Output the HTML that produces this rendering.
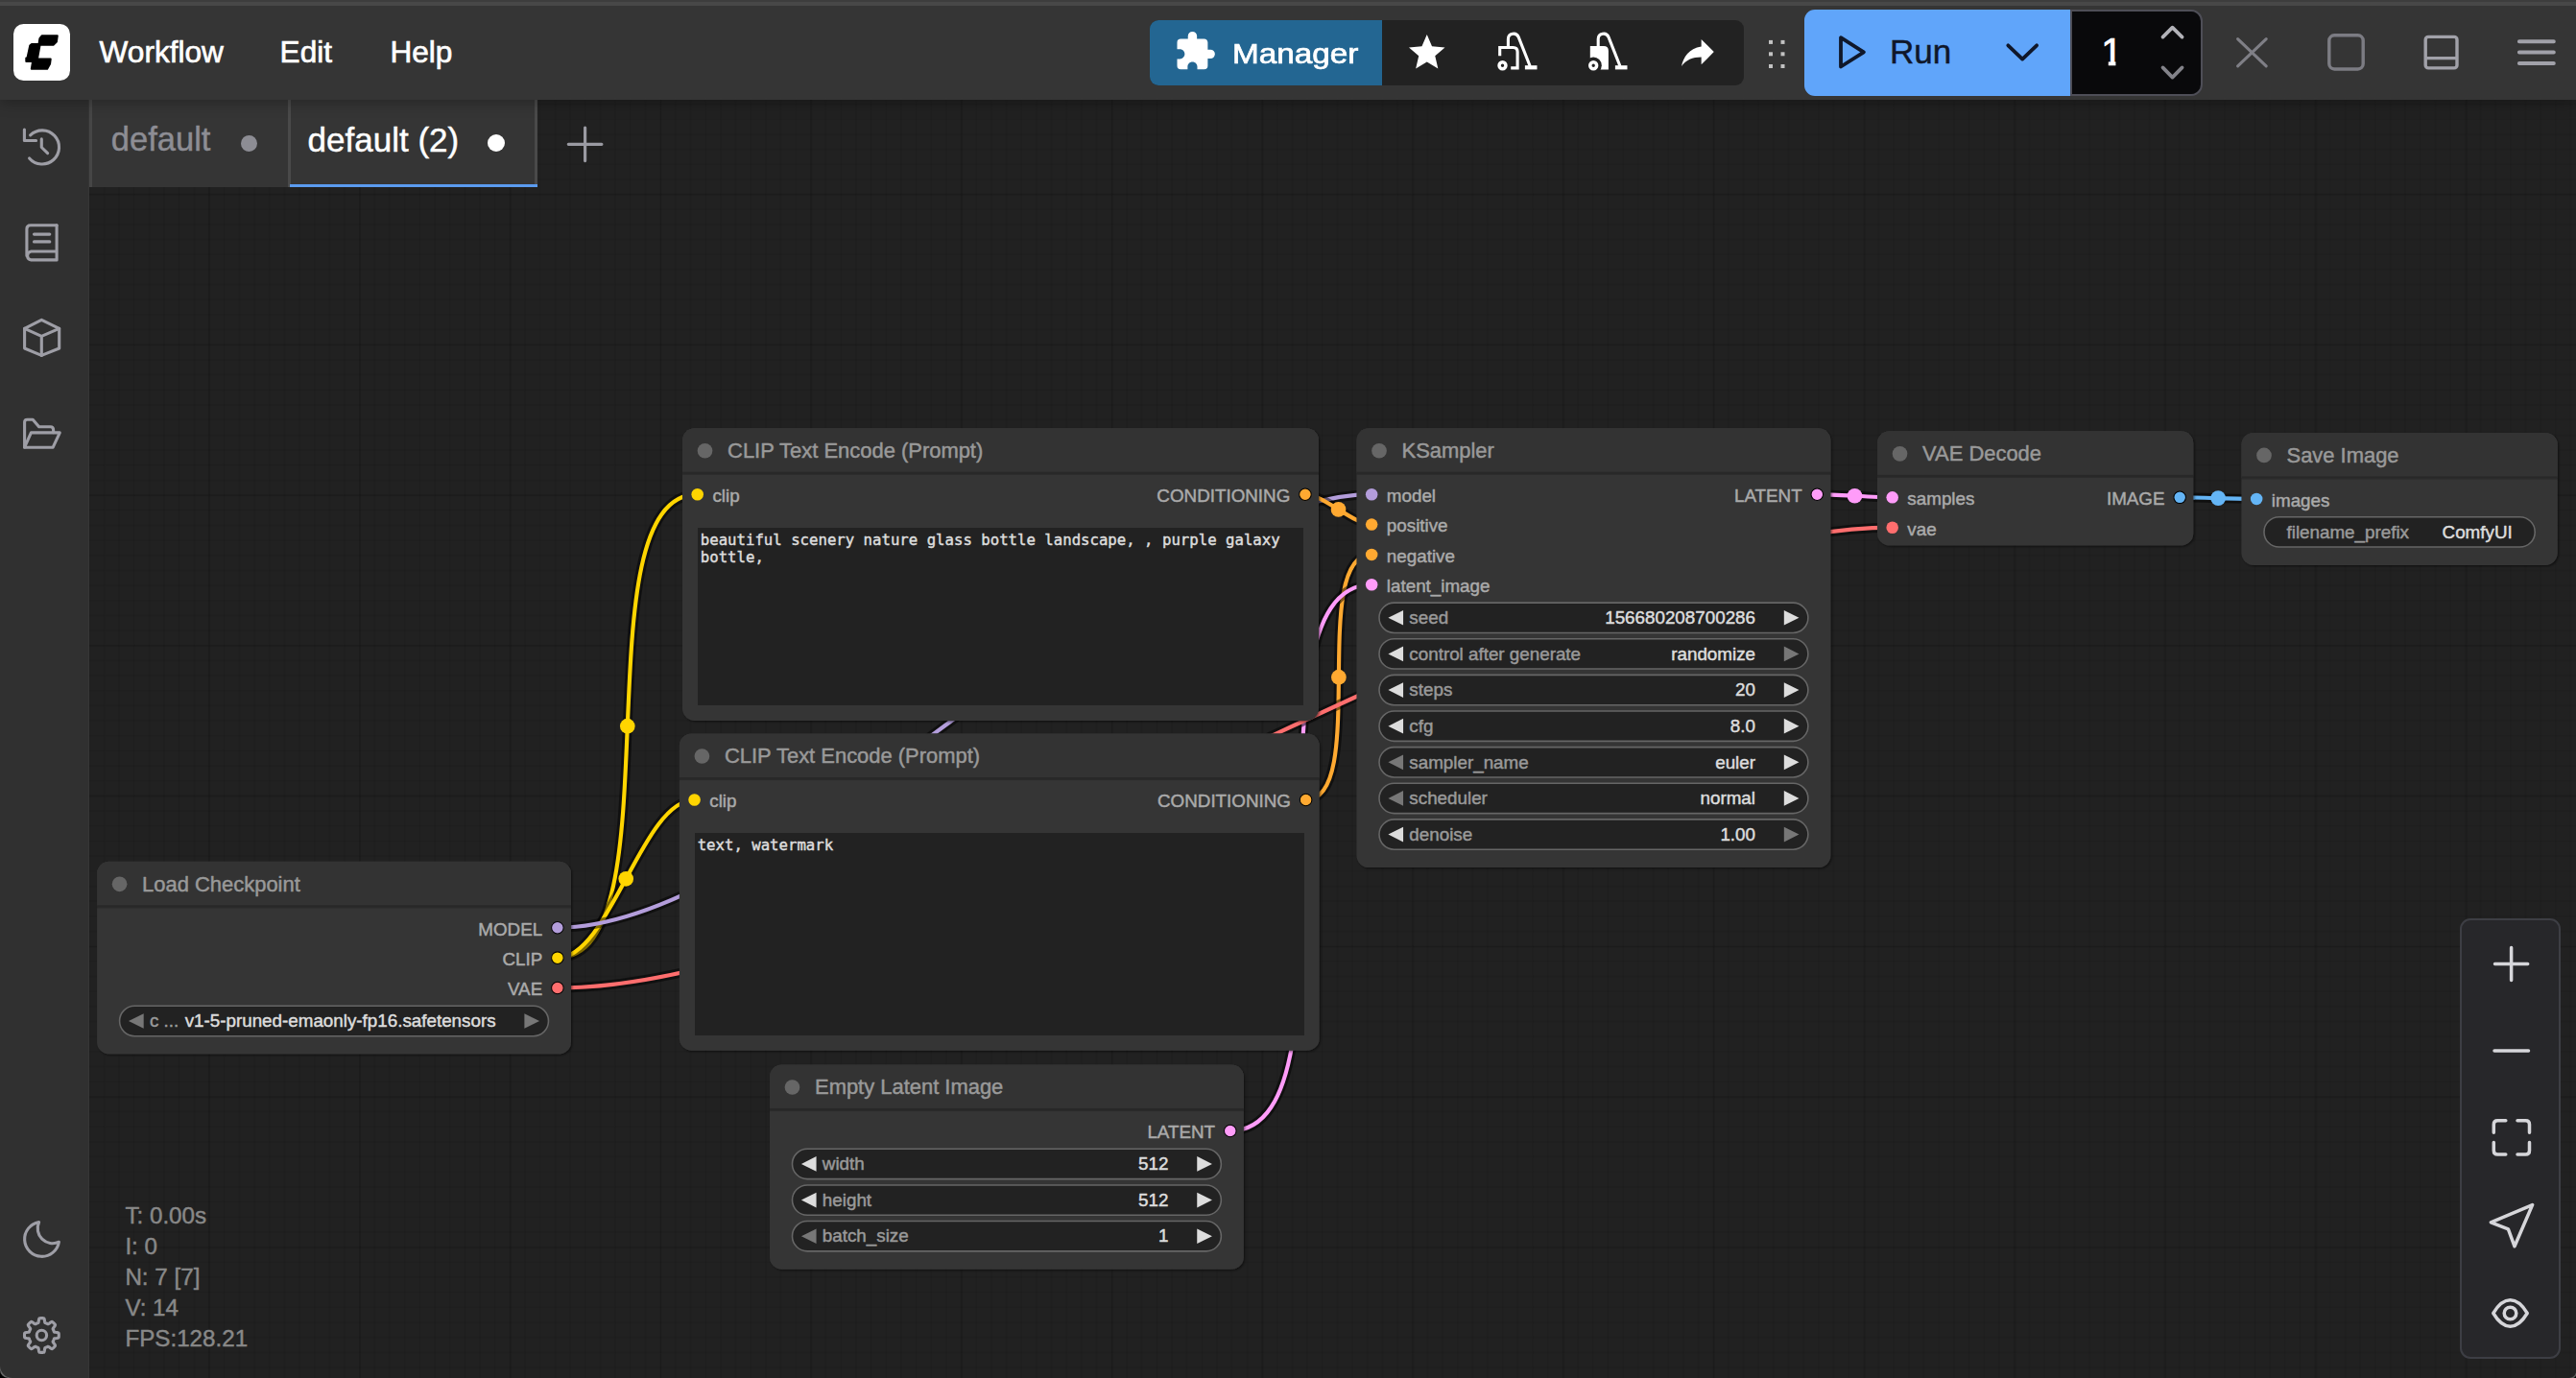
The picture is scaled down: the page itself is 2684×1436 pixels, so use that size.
<!DOCTYPE html>
<html lang="en">
<head>
<meta charset="utf-8">
<title>ComfyUI</title>
<style>
*{box-sizing:border-box}
html,body{margin:0;padding:0;width:2684px;height:1436px;overflow:hidden;background:#212121;font-family:"Liberation Sans",Arial,sans-serif}
#app{position:relative;width:2684px;height:1436px;overflow:hidden}
.abs,#app>*,#top>*,#side>*,#tabs>*,#zoom>*{position:absolute}
#canvasbg{left:93px;top:104px;width:2591px;height:1332px;background-color:#212121;
 background-image:linear-gradient(to right,rgba(0,0,0,.055) 1.6px,transparent 1.6px),linear-gradient(to bottom,rgba(0,0,0,.055) 1.6px,transparent 1.6px),linear-gradient(to right,rgba(0,0,0,.09) 1.6px,transparent 1.6px),linear-gradient(to bottom,rgba(0,0,0,.09) 1.6px,transparent 1.6px);
 background-size:15.68px 15.68px,15.68px 15.68px,156.8px 156.8px,156.8px 156.8px;background-position:-32.7px 97.6px,-32.7px 97.6px,-32.7px 97.6px,-32.7px 97.6px}
svg.graph{left:0;top:0}
.gt text{paint-order:stroke;stroke-width:.3px;stroke-linejoin:round}
.t,#info,.ta{-webkit-text-stroke:.45px currentColor}
.menu{-webkit-text-stroke:.65px currentColor}
.ta{background:#222;color:#ddd;font-family:"DejaVu Sans Mono","Liberation Mono",monospace;font-size:15.68px;line-height:18.7px;padding:4.1px 3.1px 0;white-space:pre;overflow:hidden}
#info{left:130.4px;top:1250.6px;color:#888;font-size:24.2px;line-height:32.2px;white-space:pre}
/* top bar */
#top{left:0;top:0;width:2684px;height:104px;background:#353535;box-shadow:0 3px 14px rgba(0,0,0,.28)}
#strip1{left:0;top:0;width:100%;height:1.5px;background:#3d3d3d}
#strip2{left:0;top:1.5px;width:100%;height:4px;background:#484848}
.t{white-space:pre;line-height:1}
.menu{color:#fff;font-size:31.6px}
#logo{left:14px;top:25px;width:59px;height:59px}
#grp{left:1198px;top:21px;width:619px;height:68px;background:#222;border-radius:9px;overflow:hidden}
#mgr{left:0;top:0;width:242px;height:68px;background:#236692}
#run{left:1880px;top:10px;width:277.2px;height:90px;background:#60a5fa;border-radius:11px 0 0 11px}
#num{left:2157px;top:10px;width:138px;height:90px;background:#09090b;border:2.1px solid #4e4e57;border-radius:0 12px 12px 0}
/* sidebar */
#side{left:0;top:104px;width:93px;height:1332px;background:#303030;border-right:1.2px solid #363636}
#sideb{left:93px;top:104px;width:3px;height:91px;background:#464646}
/* tabs */
#tabs{left:96px;top:104px;width:464px;height:91px;background:#353535}
#tabsep{left:204px;top:0;width:2.5px;height:91px;background:#4a4a4a}
#tabend{left:461px;top:0;width:3px;height:91px;background:#4a4a4a}
#tabul{left:206px;top:88px;width:258px;height:3px;background:#5b9bef}
.dot{border-radius:50%}
/* zoom panel */
#zoom{left:2563.2px;top:957.2px;width:104.8px;height:458.5px;background:#27272a;border:2.5px solid #3d3e44;border-radius:11px}
</style>
</head>
<body>
<div id="app">
<div id="canvasbg"></div>
<svg class="graph" width="2684" height="1436" viewBox="0 0 2684 1436"><defs><filter id="sh" x="-5%" y="-5%" width="110%" height="112%"><feDropShadow dx="0.8" dy="0.8" stdDeviation="0.6" flood-color="#000" flood-opacity="0.5"/></filter></defs><g transform="translate(60.3 201.6) scale(1.568)" font-family="'Liberation Sans',Arial,sans-serif" class="gt"><g fill="none" stroke-linejoin="round"><path d="M332 508C412.43 508 344.57 200 425 200" stroke="rgba(0,0,0,.5)" stroke-width="6.3"/><path d="M332 508C412.43 508 344.57 200 425 200" stroke="#FFD500" stroke-width="2.65"/><circle cx="378.5" cy="354" r="5" fill="#FFD500"/><path d="M332 508C366.74 508 388.26 403 423 403" stroke="rgba(0,0,0,.5)" stroke-width="6.3"/><path d="M332 508C366.74 508 388.26 403 423 403" stroke="#FFD500" stroke-width="2.65"/><circle cx="377.5" cy="455.5" r="5" fill="#FFD500"/><path d="M332 488C485.22 488 719.78 200 873 200" stroke="rgba(0,0,0,.5)" stroke-width="6.3"/><path d="M332 488C485.22 488 719.78 200 873 200" stroke="#B39DDB" stroke-width="2.65"/><circle cx="602.5" cy="344" r="5" fill="#B39DDB"/><path d="M828.85 200C840.96 200 860.88 220 873 220" stroke="rgba(0,0,0,.5)" stroke-width="6.3"/><path d="M828.85 200C840.96 200 860.88 220 873 220" stroke="#FFA931" stroke-width="2.65"/><circle cx="850.92" cy="210" r="5" fill="#FFA931"/><path d="M829.28 403C871.47 403 830.81 240 873 240" stroke="rgba(0,0,0,.5)" stroke-width="6.3"/><path d="M829.28 403C871.47 403 830.81 240 873 240" stroke="#FFA931" stroke-width="2.65"/><circle cx="851.14" cy="321.5" r="5" fill="#FFA931"/><path d="M779 623C872.74 623 779.26 260 873 260" stroke="rgba(0,0,0,.5)" stroke-width="6.3"/><path d="M779 623C872.74 623 779.26 260 873 260" stroke="#FF9CF9" stroke-width="2.65"/><circle cx="826" cy="441.5" r="5" fill="#FF9CF9"/><path d="M1169 200C1181.51 200 1206.49 202 1219 202" stroke="rgba(0,0,0,.5)" stroke-width="6.3"/><path d="M1169 200C1181.51 200 1206.49 202 1219 202" stroke="#FF9CF9" stroke-width="2.65"/><circle cx="1194" cy="201" r="5" fill="#FF9CF9"/><path d="M332 528C566.57 528 984.43 222 1219 222" stroke="rgba(0,0,0,.5)" stroke-width="6.3"/><path d="M332 528C566.57 528 984.43 222 1219 222" stroke="#FF6E6E" stroke-width="2.65"/><circle cx="775.5" cy="375" r="5" fill="#FF6E6E"/><path d="M1410 202C1422.75 202 1448.25 203 1461 203" stroke="rgba(0,0,0,.5)" stroke-width="6.3"/><path d="M1410 202C1422.75 202 1448.25 203 1461 203" stroke="#64B5F6" stroke-width="2.65"/><circle cx="1435.5" cy="202.5" r="5" fill="#64B5F6"/></g><g transform="translate(26 474)"><rect x="0" y="-30" width="315" height="128" rx="8" fill="#353535" filter="url(#sh)"/><path d="M0 0V-22 a8 8 0 0 1 8 -8 H307 a8 8 0 0 1 8 8 V0Z" fill="#333"/><rect x="0" y="-1" width="315" height="2" fill="rgba(0,0,0,.2)"/><circle cx="15" cy="-15" r="5" fill="#666"/><text x="30" y="-10.3" font-size="14" fill="#999" stroke="#999">Load Checkpoint</text><circle cx="306" cy="14" r="4" fill="#B39DDB" stroke="#000" stroke-width="0.65"/><text x="296" y="19" font-size="12" fill="#AAA" stroke="#AAA" text-anchor="end">MODEL</text><circle cx="306" cy="34" r="4" fill="#FFD500" stroke="#000" stroke-width="0.65"/><text x="296" y="39" font-size="12" fill="#AAA" stroke="#AAA" text-anchor="end">CLIP</text><circle cx="306" cy="54" r="4" fill="#FF6E6E" stroke="#000" stroke-width="0.65"/><text x="296" y="59" font-size="12" fill="#AAA" stroke="#AAA" text-anchor="end">VAE</text><rect x="15" y="66" width="285" height="20" rx="10" fill="#222" stroke="#666" stroke-width="1"/><path d="M31 71L21 76L31 81Z" fill="#777"/><path d="M284 71L294 76L284 81Z" fill="#777"/><text x="35" y="80" font-size="12" fill="#999" stroke="#999">c ...</text><text x="265" y="80" font-size="12" fill="#DDD" stroke="#DDD" text-anchor="end">v1-5-pruned-emaonly-fp16.safetensors</text></g><g transform="translate(415 186)"><rect x="0" y="-30" width="422.85" height="194.31" rx="8" fill="#353535" filter="url(#sh)"/><path d="M0 0V-22 a8 8 0 0 1 8 -8 H414.85 a8 8 0 0 1 8 8 V0Z" fill="#333"/><rect x="0" y="-1" width="422.85" height="2" fill="rgba(0,0,0,.2)"/><circle cx="15" cy="-15" r="5" fill="#666"/><text x="30" y="-10.3" font-size="14" fill="#999" stroke="#999">CLIP Text Encode (Prompt)</text><circle cx="10" cy="14" r="4" fill="#FFD500"/><text x="20" y="19" font-size="12" fill="#AAA" stroke="#AAA">clip</text><circle cx="413.85" cy="14" r="4" fill="#FFA931" stroke="#000" stroke-width="0.65"/><text x="403.85" y="19" font-size="12" fill="#AAA" stroke="#AAA" text-anchor="end">CONDITIONING</text></g><g transform="translate(413 389)"><rect x="0" y="-30" width="425.28" height="210.61" rx="8" fill="#353535" filter="url(#sh)"/><path d="M0 0V-22 a8 8 0 0 1 8 -8 H417.28 a8 8 0 0 1 8 8 V0Z" fill="#333"/><rect x="0" y="-1" width="425.28" height="2" fill="rgba(0,0,0,.2)"/><circle cx="15" cy="-15" r="5" fill="#666"/><text x="30" y="-10.3" font-size="14" fill="#999" stroke="#999">CLIP Text Encode (Prompt)</text><circle cx="10" cy="14" r="4" fill="#FFD500"/><text x="20" y="19" font-size="12" fill="#AAA" stroke="#AAA">clip</text><circle cx="416.28" cy="14" r="4" fill="#FFA931" stroke="#000" stroke-width="0.65"/><text x="406.28" y="19" font-size="12" fill="#AAA" stroke="#AAA" text-anchor="end">CONDITIONING</text></g><g transform="translate(473 609)"><rect x="0" y="-30" width="315" height="136" rx="8" fill="#353535" filter="url(#sh)"/><path d="M0 0V-22 a8 8 0 0 1 8 -8 H307 a8 8 0 0 1 8 8 V0Z" fill="#333"/><rect x="0" y="-1" width="315" height="2" fill="rgba(0,0,0,.2)"/><circle cx="15" cy="-15" r="5" fill="#666"/><text x="30" y="-10.3" font-size="14" fill="#999" stroke="#999">Empty Latent Image</text><circle cx="306" cy="14" r="4" fill="#FF9CF9" stroke="#000" stroke-width="0.65"/><text x="296" y="19" font-size="12" fill="#AAA" stroke="#AAA" text-anchor="end">LATENT</text><rect x="15" y="26" width="285" height="20" rx="10" fill="#222" stroke="#666" stroke-width="1"/><path d="M31 31L21 36L31 41Z" fill="#DDD"/><path d="M284 31L294 36L284 41Z" fill="#DDD"/><text x="35" y="40" font-size="12" fill="#999" stroke="#999">width</text><text x="265" y="40" font-size="12" fill="#DDD" stroke="#DDD" text-anchor="end">512</text><rect x="15" y="50" width="285" height="20" rx="10" fill="#222" stroke="#666" stroke-width="1"/><path d="M31 55L21 60L31 65Z" fill="#DDD"/><path d="M284 55L294 60L284 65Z" fill="#DDD"/><text x="35" y="64" font-size="12" fill="#999" stroke="#999">height</text><text x="265" y="64" font-size="12" fill="#DDD" stroke="#DDD" text-anchor="end">512</text><rect x="15" y="74" width="285" height="20" rx="10" fill="#222" stroke="#666" stroke-width="1"/><path d="M31 79L21 84L31 89Z" fill="#777"/><path d="M284 79L294 84L284 89Z" fill="#DDD"/><text x="35" y="88" font-size="12" fill="#999" stroke="#999">batch_size</text><text x="265" y="88" font-size="12" fill="#DDD" stroke="#DDD" text-anchor="end">1</text></g><g transform="translate(863 186)"><rect x="0" y="-30" width="315" height="292" rx="8" fill="#353535" filter="url(#sh)"/><path d="M0 0V-22 a8 8 0 0 1 8 -8 H307 a8 8 0 0 1 8 8 V0Z" fill="#333"/><rect x="0" y="-1" width="315" height="2" fill="rgba(0,0,0,.2)"/><circle cx="15" cy="-15" r="5" fill="#666"/><text x="30" y="-10.3" font-size="14" fill="#999" stroke="#999">KSampler</text><circle cx="10" cy="14" r="4" fill="#B39DDB"/><text x="20" y="19" font-size="12" fill="#AAA" stroke="#AAA">model</text><circle cx="10" cy="34" r="4" fill="#FFA931"/><text x="20" y="39" font-size="12" fill="#AAA" stroke="#AAA">positive</text><circle cx="10" cy="54" r="4" fill="#FFA931"/><text x="20" y="59" font-size="12" fill="#AAA" stroke="#AAA">negative</text><circle cx="10" cy="74" r="4" fill="#FF9CF9"/><text x="20" y="79" font-size="12" fill="#AAA" stroke="#AAA">latent_image</text><circle cx="306" cy="14" r="4" fill="#FF9CF9" stroke="#000" stroke-width="0.65"/><text x="296" y="19" font-size="12" fill="#AAA" stroke="#AAA" text-anchor="end">LATENT</text><rect x="15" y="86" width="285" height="20" rx="10" fill="#222" stroke="#666" stroke-width="1"/><path d="M31 91L21 96L31 101Z" fill="#DDD"/><path d="M284 91L294 96L284 101Z" fill="#DDD"/><text x="35" y="100" font-size="12" fill="#999" stroke="#999">seed</text><text x="265" y="100" font-size="12" fill="#DDD" stroke="#DDD" text-anchor="end">156680208700286</text><rect x="15" y="110" width="285" height="20" rx="10" fill="#222" stroke="#666" stroke-width="1"/><path d="M31 115L21 120L31 125Z" fill="#DDD"/><path d="M284 115L294 120L284 125Z" fill="#777"/><text x="35" y="124" font-size="12" fill="#999" stroke="#999">control after generate</text><text x="265" y="124" font-size="12" fill="#DDD" stroke="#DDD" text-anchor="end">randomize</text><rect x="15" y="134" width="285" height="20" rx="10" fill="#222" stroke="#666" stroke-width="1"/><path d="M31 139L21 144L31 149Z" fill="#DDD"/><path d="M284 139L294 144L284 149Z" fill="#DDD"/><text x="35" y="148" font-size="12" fill="#999" stroke="#999">steps</text><text x="265" y="148" font-size="12" fill="#DDD" stroke="#DDD" text-anchor="end">20</text><rect x="15" y="158" width="285" height="20" rx="10" fill="#222" stroke="#666" stroke-width="1"/><path d="M31 163L21 168L31 173Z" fill="#DDD"/><path d="M284 163L294 168L284 173Z" fill="#DDD"/><text x="35" y="172" font-size="12" fill="#999" stroke="#999">cfg</text><text x="265" y="172" font-size="12" fill="#DDD" stroke="#DDD" text-anchor="end">8.0</text><rect x="15" y="182" width="285" height="20" rx="10" fill="#222" stroke="#666" stroke-width="1"/><path d="M31 187L21 192L31 197Z" fill="#777"/><path d="M284 187L294 192L284 197Z" fill="#DDD"/><text x="35" y="196" font-size="12" fill="#999" stroke="#999">sampler_name</text><text x="265" y="196" font-size="12" fill="#DDD" stroke="#DDD" text-anchor="end">euler</text><rect x="15" y="206" width="285" height="20" rx="10" fill="#222" stroke="#666" stroke-width="1"/><path d="M31 211L21 216L31 221Z" fill="#777"/><path d="M284 211L294 216L284 221Z" fill="#DDD"/><text x="35" y="220" font-size="12" fill="#999" stroke="#999">scheduler</text><text x="265" y="220" font-size="12" fill="#DDD" stroke="#DDD" text-anchor="end">normal</text><rect x="15" y="230" width="285" height="20" rx="10" fill="#222" stroke="#666" stroke-width="1"/><path d="M31 235L21 240L31 245Z" fill="#DDD"/><path d="M284 235L294 240L284 245Z" fill="#777"/><text x="35" y="244" font-size="12" fill="#999" stroke="#999">denoise</text><text x="265" y="244" font-size="12" fill="#DDD" stroke="#DDD" text-anchor="end">1.00</text></g><g transform="translate(1209 188)"><rect x="0" y="-30" width="210" height="76" rx="8" fill="#353535" filter="url(#sh)"/><path d="M0 0V-22 a8 8 0 0 1 8 -8 H202 a8 8 0 0 1 8 8 V0Z" fill="#333"/><rect x="0" y="-1" width="210" height="2" fill="rgba(0,0,0,.2)"/><circle cx="15" cy="-15" r="5" fill="#666"/><text x="30" y="-10.3" font-size="14" fill="#999" stroke="#999">VAE Decode</text><circle cx="10" cy="14" r="4" fill="#FF9CF9"/><text x="20" y="19" font-size="12" fill="#AAA" stroke="#AAA">samples</text><circle cx="10" cy="34" r="4" fill="#FF6E6E"/><text x="20" y="39" font-size="12" fill="#AAA" stroke="#AAA">vae</text><circle cx="201" cy="14" r="4" fill="#64B5F6" stroke="#000" stroke-width="0.65"/><text x="191" y="19" font-size="12" fill="#AAA" stroke="#AAA" text-anchor="end">IMAGE</text></g><g transform="translate(1451 189)"><rect x="0" y="-30" width="210" height="88" rx="8" fill="#353535" filter="url(#sh)"/><path d="M0 0V-22 a8 8 0 0 1 8 -8 H202 a8 8 0 0 1 8 8 V0Z" fill="#333"/><rect x="0" y="-1" width="210" height="2" fill="rgba(0,0,0,.2)"/><circle cx="15" cy="-15" r="5" fill="#666"/><text x="30" y="-10.3" font-size="14" fill="#999" stroke="#999">Save Image</text><circle cx="10" cy="14" r="4" fill="#64B5F6"/><text x="20" y="19" font-size="12" fill="#AAA" stroke="#AAA">images</text><rect x="15" y="26" width="180" height="20" rx="10" fill="#222" stroke="#666" stroke-width="1"/><text x="30" y="40" font-size="12" fill="#999" stroke="#999">filename_prefix</text><text x="180" y="40" font-size="12" fill="#DDD" stroke="#DDD" text-anchor="end">ComfyUI</text></g></g></svg>
<div class="ta" style="left:726.7px;top:549.7px;width:631.66px;height:185.51px">beautiful scenery nature glass bottle landscape, , purple galaxy<br>bottle,</div><div class="ta" style="left:723.56px;top:868px;width:635.48px;height:211.06px">text, watermark</div>
<div id="info">T: 0.00s
I: 0
N: 7 [7]
V: 14
FPS:128.21</div>

<div id="side">
<svg class="abs" style="left:0;top:0" width="93" height="1332" viewBox="0 104 93 1332" fill="none" stroke="#9e9ea6" stroke-width="3.1" stroke-linecap="round" stroke-linejoin="round"><path d="M25.4 135V146.5H37.6"/><path d="M31.6 140.9A17.6 17.6 0 1 1 30.6 164.9"/><path d="M43.3 144.9V153.5L49.6 159.6"/><path d="M59.1 234.8H31.9Q27.9 234.8 27.9 238.8V266.4"/><path d="M59.1 234.8V270.9H32.4A4.5 4.5 0 0 1 32.4 262H59.1"/><path d="M35.5 244.1H51.8M35.5 251.9H51.8"/><path d="M43.3 333.4L61.7 342.4V363L43.3 370.4L25.6 363V342.4Z"/><path d="M25.6 342.4L43.3 350.4L61.7 342.4M43.3 350.4V370.4"/><path d="M25.6 466V440Q25.6 437.2 28.4 437.2H34.2L40.6 444.8H52.6Q55.6 444.8 55.6 448V450.8"/><path d="M25.6 466.2L32.4 450.9H62.3L55.2 466.2Z"/><path d="M40.6 1273.6A18 18 0 1 0 61.4 1294.2A15.6 15.6 0 0 1 40.6 1273.6Z"/><path d="M43.40 1373.60 L43.96 1373.61 L44.52 1373.64 L45.08 1373.68 L45.64 1373.76 L46.11 1374.41 L46.40 1375.76 L46.58 1377.28 L46.78 1378.32 L47.14 1378.63 L47.54 1378.76 L47.94 1378.89 L48.33 1379.04 L48.72 1379.20 L49.11 1379.38 L49.48 1379.56 L49.86 1379.76 L50.33 1379.79 L51.21 1379.20 L52.41 1378.25 L53.57 1377.50 L54.36 1377.37 L54.81 1377.71 L55.24 1378.07 L55.65 1378.45 L56.06 1378.84 L56.45 1379.25 L56.83 1379.66 L57.19 1380.09 L57.53 1380.54 L57.40 1381.33 L56.65 1382.49 L55.70 1383.69 L55.11 1384.57 L55.14 1385.04 L55.34 1385.42 L55.52 1385.79 L55.70 1386.18 L55.86 1386.57 L56.01 1386.96 L56.14 1387.36 L56.27 1387.76 L56.58 1388.12 L57.62 1388.32 L59.14 1388.50 L60.49 1388.79 L61.14 1389.26 L61.22 1389.82 L61.26 1390.38 L61.29 1390.94 L61.30 1391.50 L61.29 1392.06 L61.26 1392.62 L61.22 1393.18 L61.14 1393.74 L60.49 1394.21 L59.14 1394.50 L57.62 1394.68 L56.58 1394.88 L56.27 1395.24 L56.14 1395.64 L56.01 1396.04 L55.86 1396.43 L55.70 1396.82 L55.52 1397.21 L55.34 1397.58 L55.14 1397.96 L55.11 1398.43 L55.70 1399.31 L56.65 1400.51 L57.40 1401.67 L57.53 1402.46 L57.19 1402.91 L56.83 1403.34 L56.45 1403.75 L56.06 1404.16 L55.65 1404.55 L55.24 1404.93 L54.81 1405.29 L54.36 1405.63 L53.57 1405.50 L52.41 1404.75 L51.21 1403.80 L50.33 1403.21 L49.86 1403.24 L49.48 1403.44 L49.11 1403.62 L48.72 1403.80 L48.33 1403.96 L47.94 1404.11 L47.54 1404.24 L47.14 1404.37 L46.78 1404.68 L46.58 1405.72 L46.40 1407.24 L46.11 1408.59 L45.64 1409.24 L45.08 1409.32 L44.52 1409.36 L43.96 1409.39 L43.40 1409.40 L42.84 1409.39 L42.28 1409.36 L41.72 1409.32 L41.16 1409.24 L40.69 1408.59 L40.40 1407.24 L40.22 1405.72 L40.02 1404.68 L39.66 1404.37 L39.26 1404.24 L38.86 1404.11 L38.47 1403.96 L38.08 1403.80 L37.69 1403.62 L37.32 1403.44 L36.94 1403.24 L36.47 1403.21 L35.59 1403.80 L34.39 1404.75 L33.23 1405.50 L32.44 1405.63 L31.99 1405.29 L31.56 1404.93 L31.15 1404.55 L30.74 1404.16 L30.35 1403.75 L29.97 1403.34 L29.61 1402.91 L29.27 1402.46 L29.40 1401.67 L30.15 1400.51 L31.10 1399.31 L31.69 1398.43 L31.66 1397.96 L31.46 1397.58 L31.28 1397.21 L31.10 1396.82 L30.94 1396.43 L30.79 1396.04 L30.66 1395.64 L30.53 1395.24 L30.22 1394.88 L29.18 1394.68 L27.66 1394.50 L26.31 1394.21 L25.66 1393.74 L25.58 1393.18 L25.54 1392.62 L25.51 1392.06 L25.50 1391.50 L25.51 1390.94 L25.54 1390.38 L25.58 1389.82 L25.66 1389.26 L26.31 1388.79 L27.66 1388.50 L29.18 1388.32 L30.22 1388.12 L30.53 1387.76 L30.66 1387.36 L30.79 1386.96 L30.94 1386.57 L31.10 1386.18 L31.28 1385.79 L31.46 1385.42 L31.66 1385.04 L31.69 1384.57 L31.10 1383.69 L30.15 1382.49 L29.40 1381.33 L29.27 1380.54 L29.61 1380.09 L29.97 1379.66 L30.35 1379.25 L30.74 1378.84 L31.15 1378.45 L31.56 1378.07 L31.99 1377.71 L32.44 1377.37 L33.23 1377.50 L34.39 1378.25 L35.59 1379.20 L36.47 1379.79 L36.94 1379.76 L37.32 1379.56 L37.69 1379.38 L38.08 1379.20 L38.47 1379.04 L38.86 1378.89 L39.26 1378.76 L39.66 1378.63 L40.02 1378.32 L40.22 1377.28 L40.40 1375.76 L40.69 1374.41 L41.16 1373.76 L41.72 1373.68 L42.28 1373.64 L42.84 1373.61Z" stroke-width="3.1"/><circle cx="43.4" cy="1391.5" r="5.2"/></svg>
</div>
<div id="sideb"></div>
<div id="tabs">
 <span class="t" style="left:19.8px;top:24.4px;font-size:34.5px;color:#8d8d94">default</span>
 <div class="dot" style="left:154.8px;top:36.6px;width:17.6px;height:17.6px;background:#8d8d94"></div>
 <div id="tabsep"></div>
 <span class="t" style="left:224.6px;top:23.6px;font-size:35px;color:#fff">default (2)</span>
 <div class="dot" style="left:412.4px;top:35.5px;width:18px;height:18px;background:#fff"></div>
 <div id="tabend"></div>
 <div id="tabul"></div>
</div>
<svg class="abs" style="left:585px;top:126px" width="50" height="50" viewBox="0 0 50 50"><path d="M24.6 7V41.6M7.3 24.3H41.9" stroke="#9a9aa2" stroke-width="3.2" stroke-linecap="round" fill="none"/></svg>

<div id="top">
 <div id="strip1"></div><div id="strip2"></div>
 <!--TOPICONS-->
 <span class="t menu" style="left:103.6px;top:39.05px">Workflow</span>
 <span class="t menu" style="left:291.6px;top:39.05px">Edit</span>
 <span class="t menu" style="left:406.4px;top:39.05px">Help</span>
 <div id="grp"><div id="mgr"></div></div>
 <span class="t" style="left:1283.6px;top:41.6px;font-size:29px;color:#fff;-webkit-text-stroke:.7px #fff;transform-origin:0 0;transform:scaleX(1.148);display:inline-block">Manager</span>
 <div id="run"></div>
 <span class="t" style="left:1969px;top:36.2px;font-size:35px;color:#0f172a">Run</span>
 <div id="num"></div>
 <span class="t" style="left:2189.2px;top:34px;font-size:40px;color:#fff;-webkit-text-stroke:.7px #fff;clip-path:polygon(0 0,100% 0,100% 29.4px,15.2px 29.4px,15.2px 100%,7.6px 100%,7.6px 29.4px,0 29.4px)">1</span>
 <svg class="abs" style="left:0;top:0" width="2684" height="104" viewBox="0 0 2684 104" fill="none"><rect x="14" y="25" width="59" height="59" rx="10.5" fill="#fff"/><path d="M43.8 37.2H59.8L58.9 43.6L55.6 46.7H41.6L38.9 61.6H52.7L52.1 66.5L49.2 71.8H32.8L34.1 64H27.3V60.6H28.4L31.2 47.6L33 46H40.5L41.4 40.2Z" fill="#000" stroke="#000" stroke-width="2" stroke-linejoin="round"/><g transform="translate(1222.75 31) scale(1.875)"><path d="M20.5,11H19V7C19,5.89 18.1,5 17,5H13V3.5A2.5,2.5 0 0,0 10.5,1A2.5,2.5 0 0,0 8,3.5V5H4A2,2 0 0,0 2,7V10.8H3.5C5,10.8 6.2,12 6.2,13.5C6.2,15 5,16.2 3.5,16.2H2V20A2,2 0 0,0 4,22H7.8V20.5C7.8,19 9,17.8 10.5,17.8C12,17.8 13.2,19 13.2,20.5V22H17A2,2 0 0,0 19,20V16H20.5A2.5,2.5 0 0,0 23,13.5A2.5,2.5 0 0,0 20.5,11Z" fill="#fff"/></g><g transform="translate(1464.25 32.15) scale(1.875)"><path d="M12,17.27L18.18,21L16.54,13.97L22,9.24L14.81,8.62L12,2L9.19,8.62L2,9.24L7.45,13.97L5.82,21L12,17.27Z" fill="#fff"/></g><g transform="translate(1746.4 31.6) scale(1.875)"><path d="M21,12L14,5V9C7,10 4,15 3,20C5.5,16.5 9,14.9 14,14.9V19L21,12Z" fill="#fff"/></g><g stroke="#fff" stroke-width="3.1" fill="none"><circle cx="1565.5" cy="68.2" r="3.45" stroke-width="3.5"/><path d="M1562.7 58.3V49.5H1576.6Q1581.1 49.5 1581.1 54V70.9H1574.2"/><path d="M1571.4 49.5V40.8A5.6 5.6 0 0 1 1582.2 38.7L1594.2 69"/><rect x="1588.9" y="68.2" width="12.6" height="4.2" fill="#fff" stroke="none"/></g><g stroke="#fff" stroke-width="3.1" fill="none"><path d="M1656.8 48H1671Q1675.9 48 1675.9 53V72.4H1656.8Z" fill="#fff" stroke="none"/><circle cx="1660.2" cy="68.2" r="8.6" fill="#222" stroke="none"/><rect x="1650" y="62" width="6.8" height="12" fill="#222" stroke="none"/><circle cx="1660.2" cy="68.2" r="3.45" stroke-width="3.5"/><path d="M1665.2 49.5V40.8A5.6 5.6 0 0 1 1676 38.7L1688 69"/><rect x="1682.9" y="68.2" width="12.6" height="4.2" fill="#fff" stroke="none"/></g><rect x="1843" y="41.9" width="4" height="4" fill="#c2c2c2"/><rect x="1843" y="54.3" width="4" height="4" fill="#c2c2c2"/><rect x="1843" y="67" width="4" height="4" fill="#c2c2c2"/><rect x="1855.5" y="41.9" width="4" height="4" fill="#c2c2c2"/><rect x="1855.5" y="54.3" width="4" height="4" fill="#c2c2c2"/><rect x="1855.5" y="67" width="4" height="4" fill="#c2c2c2"/><path d="M1918 39.2V69.5L1941.9 54.3Z" stroke="#0f172a" stroke-width="3.8" stroke-linejoin="round"/><path d="M2092.3 47.3L2107.2 61.6L2122.1 47.3" stroke="#0f172a" stroke-width="3.8" stroke-linecap="round" stroke-linejoin="round"/><path d="M2253.5 38.6L2263.5 28.6L2273.6 38.6" stroke="#b2b2b8" stroke-width="3.7" stroke-linecap="round" stroke-linejoin="round"/><path d="M2253.5 70.4L2263.5 80.6L2273.6 70.4" stroke="#83838a" stroke-width="3.7" stroke-linecap="round" stroke-linejoin="round"/><path d="M2331.6 40.6L2361.2 68.9M2361.2 40.6L2331.6 68.9" stroke="#7f7f86" stroke-width="3.1" stroke-linecap="round"/><rect x="2426.8" y="36.8" width="35.4" height="35.2" rx="5.5" stroke="#7c7c83" stroke-width="3.4"/><rect x="2527.2" y="38.4" width="32.8" height="32.5" rx="3" stroke="#a1a1a9" stroke-width="3.4"/><path d="M2527.2 60.6H2560" stroke="#a1a1a9" stroke-width="3.4"/><path d="M2624.9 43.2H2660.8M2624.9 54.5H2660.8M2624.9 66H2660.8" stroke="#a1a1a9" stroke-width="4" stroke-linecap="round"/></svg>
</div>

<svg class="abs" style="left:0;top:1420px" width="16" height="16" viewBox="0 0 16 16"><path d="M0 3A13 13 0 0 0 13 16H0Z" fill="#666"/><path d="M0 7.5A8.5 8.5 0 0 0 8.5 16H0Z" fill="#000"/></svg>
<svg class="abs" style="left:2668px;top:1420px" width="16" height="16" viewBox="0 0 16 16"><path d="M16 11.5A8 8 0 0 1 9.5 16H16Z" fill="#000"/><path d="M16.5 11A8 8 0 0 1 9.5 16.5" fill="none" stroke="#5a5a5a" stroke-width="1.6"/></svg>
<div id="zoom"></div>
<svg class="abs" style="left:2560px;top:950px" width="120" height="480" viewBox="2560 950 120 480" fill="none" stroke="#d6d6da" stroke-width="3.5" stroke-linecap="round" stroke-linejoin="round"><path d="M2616.6 987.4V1021.6M2599.5 1004.5H2633.7"/><path d="M2599 1094.9H2634.5"/><path d="M2598.3 1180.2V1171.7Q2598.3 1167.7 2602.3 1167.7H2610.8"/><path d="M2623.0 1167.7H2631.5Q2635.5 1167.7 2635.5 1171.7V1180.2"/><path d="M2635.5 1190.4V1198.9Q2635.5 1202.9 2631.5 1202.9H2623.0"/><path d="M2610.8 1202.9H2602.3Q2598.3 1202.9 2598.3 1198.9V1190.4"/><path d="M2638.6 1255.6L2595.4 1273.8L2613.4 1280.8L2620 1298.8Z"/><path d="M2597.8 1368.5Q2606 1354.8 2615.5 1354.8Q2625 1354.8 2633.2 1368.5Q2625 1382.2 2615.5 1382.2Q2606 1382.2 2597.8 1368.5Z"/><circle cx="2615.5" cy="1368.5" r="6.3"/></svg>
</div>
</body>
</html>
